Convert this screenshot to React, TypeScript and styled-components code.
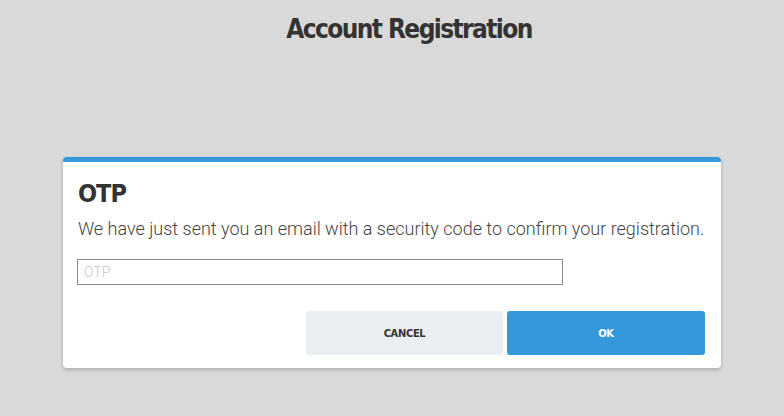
import React, { useState } from "react";
import styled, { createGlobalStyle } from "styled-components";

const GlobalStyle = createGlobalStyle`
  html, body {
    margin: 0;
    padding: 0;
    background: #d9d9d9;
  }
  body {
    font-family: Roboto, "Open Sans", sans-serif;
    color: #333;
  }
`;

const Page = styled.div`
  min-height: 100vh;
  display: flex;
  flex-direction: column;
  align-items: center;
  padding-top: 12px;
  box-sizing: border-box;
`;

const Heading = styled.h1`
  margin: 0 0 0 34px;
  font-family: "DejaVu Sans Condensed", sans-serif;
  font-weight: 700;
  font-size: 26px;
  letter-spacing: -1.6px;
  line-height: 34px;
  color: #333;
`;

const Card = styled.div`
  width: 658px;
  margin-top: 111px;
  box-sizing: border-box;
  background: #fff;
  border-top: 5px solid #3498db;
  border-radius: 4px;
  box-shadow: 0 2px 4px rgba(0, 0, 0, 0.2);
  padding: 15px 16px 13px 14px;
`;

const Title = styled.h2`
  margin: 0 0 0 1px;
  font-family: "DejaVu Sans Condensed", sans-serif;
  font-weight: 700;
  font-size: 25px;
  letter-spacing: -1px;
  line-height: 34px;
  color: #333;
`;

const Message = styled.p`
  margin: 6px 0 0 1px;
  font-weight: 300;
  font-size: 18px;
  line-height: 24px;
  color: #444;
`;

const Input = styled.input`
  display: block;
  margin-top: 18px;
  width: 486px;
  height: 26px;
  box-sizing: border-box;
  border: 1px solid #888;
  border-radius: 0;
  padding: 0 6px;
  font-family: Roboto, sans-serif;
  font-weight: 300;
  font-size: 14px;
  color: #333;
  outline: none;
  &::placeholder {
    color: #c8c8c8;
  }
`;

const Actions = styled.div`
  display: flex;
  justify-content: flex-end;
  gap: 4px;
  margin-top: 26px;
`;

const Button = styled.button<{ $primary?: boolean }>`
  width: ${(p) => (p.$primary ? "198px" : "197px")};
  height: 44px;
  border: none;
  border-radius: 3px;
  cursor: pointer;
  font-family: "DejaVu Sans Condensed", sans-serif;
  font-weight: 700;
  font-size: 11px;
  letter-spacing: -0.3px;
  text-transform: uppercase;
  background: ${(p) => (p.$primary ? "#3498db" : "#ebeef0")};
  color: ${(p) => (p.$primary ? "#fff" : "#333")};
`;

const App = () => {
  const [otp, setOtp] = useState("");
  return (
    <>
      <GlobalStyle />
      <Page>
        <Heading>Account Registration</Heading>
        <Card>
          <Title>OTP</Title>
          <Message>
            We have just sent you an email with a security code to confirm
            your registration.
          </Message>
          <Input
            placeholder="OTP"
            value={otp}
            onChange={(e) => setOtp(e.target.value)}
          />
          <Actions>
            <Button>Cancel</Button>
            <Button $primary>OK</Button>
          </Actions>
        </Card>
      </Page>
    </>
  );
};

export default App;
